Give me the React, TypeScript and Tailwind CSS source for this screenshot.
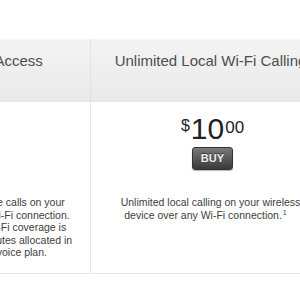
import React from 'react';

interface Plan {
  title: string;
  price?: { dollars: string; cents: string };
  lines: string[];
  titleOffset?: string;
}

const plans: Plan[] = [
  {
    title: 'Wi-Fi Calling Access',
    titleOffset: 'pl-[8px]',
    lines: [
      'Make or receive any phone calls on your',
      'wireless device over any Wi-Fi connection.',
      'Calling while outside of Wi-Fi coverage is',
      'deducted from the plan minutes allocated in',
      'your existing wireless voice plan.',
    ],
  },
  {
    title: 'Unlimited Local Wi-Fi Calling',
    price: { dollars: '10', cents: '00' },
    lines: ['Unlimited local calling on your wireless', 'device over any Wi-Fi connection.'],
  },
];

const App: React.FC = () => {
  return (
    <div
      className="w-[300px] h-[300px] overflow-hidden bg-white text-[#444]"
      style={{ fontFamily: '"Liberation Sans", Arial, sans-serif' }}
    >
      <div className="flex ml-[-149px] mt-[39px]">
        {plans.map((plan, i) => (
          <div key={i} className="w-[240px] shrink-0 flex flex-col">
            {/* header cell */}
            <div
              className={`h-[63px] bg-gradient-to-b from-[#f4f4f4] to-[#e9e9e9] border-r border-[#e2e2e2] flex justify-center pt-[13px] ${plan.titleOffset ?? ''}`}
            >
              <span className="text-[15px] leading-[17px] text-[#4d4d4d] whitespace-nowrap">{plan.title}</span>
            </div>

            {/* body cell */}
            <div className="h-[172px] border-r border-b border-[#e6e6e6] flex flex-col items-center pt-[12px]">
              <div className="h-[82px] flex flex-col items-center ml-[4px]">
                {plan.price && (
                  <>
                    <div className="flex items-start text-[#222]">
                      <span className="text-[16px] leading-none mt-[4px] mr-[1px]">$</span>
                      <span className="text-[30px] leading-none">{plan.price.dollars}</span>
                      <span className="text-[17px] leading-none mt-[5px] ml-[1px]">{plan.price.cents}</span>
                    </div>
                    <button className="mt-[3px] w-[41px] h-[23px] rounded-[3px] border border-[#333] bg-gradient-to-b from-[#7a7a7a] to-[#3a3a3a] text-[11px] font-bold text-[#eee] leading-none shadow-[0_1px_1px_rgba(0,0,0,0.3)] [text-shadow:0_-1px_0_rgba(0,0,0,0.5)]">
                      BUY
                    </button>
                  </>
                )}
              </div>
              <div className="text-[10.5px] leading-[12.6px] text-center text-[#3d3d3d]">
                {plan.lines.map((line, j) => {
                  const last = j === plan.lines.length - 1;
                  return (
                    <div key={j} className={`whitespace-nowrap ${plan.price && last ? 'pr-[10px]' : ''}`}>
                      {line}
                      {plan.price && last && <sup className="text-[7px] ml-[1px]">1</sup>}
                    </div>
                  );
                })}
              </div>
            </div>
          </div>
        ))}
      </div>
    </div>
  );
};

export default App;
